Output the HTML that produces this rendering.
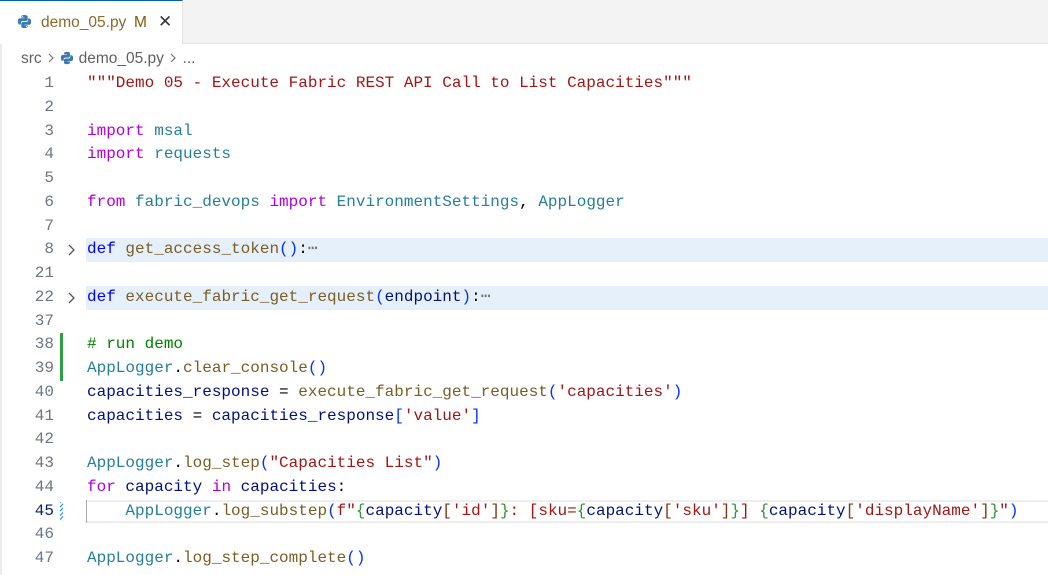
<!DOCTYPE html>
<html><head><meta charset="utf-8"><style>
body{margin:0;width:1048px;height:575px;overflow:hidden;background:#fff;font-family:"Liberation Sans",sans-serif;position:relative}
.tabbar{position:absolute;left:0;top:0;width:1048px;height:43px;background:#f3f3f3;border-bottom:1px solid #e5e5e5}
.tab{position:absolute;left:0;top:0;width:183px;height:44px;background:#fff;border-top:1px solid #005fb8;box-sizing:border-box;border-right:1px solid #e5e5e5}
.tab .t{position:absolute;left:41px;top:13px;font-size:15.5px;color:#8c6a2a}
.tab .m{position:absolute;left:134px;top:13px;font-size:15.5px;color:#895503}
.tab .x{position:absolute;left:158px;top:11px;font-size:17px;color:#333}
.crumb{position:absolute;top:50px;left:21px;font-size:15.5px;color:#616161}
.code{position:absolute;left:0;top:72px;width:1048px;font-family:"Liberation Mono",monospace;font-size:16px}
.r{position:relative;height:23.75px;line-height:23.75px;white-space:pre}
.n{position:absolute;left:0;width:54px;text-align:right;color:#6e7681}
.c{position:absolute;left:87px}
.f{position:absolute;left:86px;right:0;top:0;bottom:0;background:#e6f0fa}
.ch{position:absolute;left:66px;top:0;}
.k{color:#af00db}.d{color:#0000ff}.fn{color:#795e26}.v{color:#001080}.cl{color:#267f99}.s{color:#a31515}.cm{color:#008000}.p1{color:#0431fa}.p2{color:#319331}.p3{color:#7b3814}.o{color:#000}
.g{position:absolute;left:60px;width:3px;top:0;bottom:0;background:#2ea043}
.edge{position:absolute;left:0;top:44px;width:2px;bottom:0;background:#ececec}
</style></head><body>
<div class="tabbar"><div class="tab">
<svg style="position:absolute;left:17px;top:13px" width="15" height="15" viewBox="0 0 16 16"><path d="M7.9 1C4.5 1 4.7 2.5 4.7 2.5V4h3.3v.5H3.3S1 4.2 1 7.8s2 3.4 2 3.4h1.2V9.5s-.1-2 2-2h3.3s1.9 0 1.9-1.9V2.9S11.7 1 7.9 1zM6.1 2.1a.6.6 0 110 1.2.6.6 0 010-1.2z" fill="#3a7ab0"/><path d="M8.1 15c3.4 0 3.2-1.5 3.2-1.5V12H8v-.5h4.7S15 11.8 15 8.2s-2-3.4-2-3.4h-1.2v1.7s.1 2-2 2H6.5s-1.9 0-1.9 1.9v3.1S4.3 15 8.1 15zm1.8-1.1a.6.6 0 110-1.2.6.6 0 010 1.2z" fill="#3a7ab0"/></svg>
<span class="t">demo_05.py</span><span class="m">M</span><span class="x">✕</span></div></div>
<div class="edge"></div>
<div class="crumb">src <svg width="10" height="12" viewBox="0 0 10 12" style="vertical-align:-1px"><path d="M3 2l4 4-4 4" stroke="#777" fill="none" stroke-width="1.2"/></svg> <svg style="vertical-align:-2px" width="14" height="14" viewBox="0 0 16 16"><path d="M7.9 1C4.5 1 4.7 2.5 4.7 2.5V4h3.3v.5H3.3S1 4.2 1 7.8s2 3.4 2 3.4h1.2V9.5s-.1-2 2-2h3.3s1.9 0 1.9-1.9V2.9S11.7 1 7.9 1z" fill="#3a7ab0"/><path d="M8.1 15c3.4 0 3.2-1.5 3.2-1.5V12H8v-.5h4.7S15 11.8 15 8.2s-2-3.4-2-3.4h-1.2v1.7s.1 2-2 2H6.5s-1.9 0-1.9 1.9v3.1S4.3 15 8.1 15z" fill="#3a7ab0"/></svg> demo_05.py <svg width="10" height="12" viewBox="0 0 10 12" style="vertical-align:-1px"><path d="M3 2l4 4-4 4" stroke="#777" fill="none" stroke-width="1.2"/></svg> ...</div>
<div class="code">
<div class="r"><span class="n">1</span><span class="c s">"""Demo 05 - Execute Fabric REST API Call to List Capacities"""</span></div>
<div class="r"><span class="n">2</span></div>
<div class="r"><span class="n">3</span><span class="c"><span class="k">import</span> <span class="cl">msal</span></span></div>
<div class="r"><span class="n">4</span><span class="c"><span class="k">import</span> <span class="cl">requests</span></span></div>
<div class="r"><span class="n">5</span></div>
<div class="r"><span class="n">6</span><span class="c"><span class="k">from</span> <span class="cl">fabric_devops</span> <span class="k">import</span> <span class="cl">EnvironmentSettings</span>, <span class="cl">AppLogger</span></span></div>
<div class="r"><span class="n">7</span></div>
<div class="r"><span class="f"></span><span class="n">8</span><svg class="ch" width="12" height="24" viewBox="0 0 12 24"><path d="M3 7l5 5-5 5" stroke="#555" fill="none" stroke-width="1.3"/></svg><span class="c"><span class="d">def</span> <span class="fn">get_access_token</span><span class="p1">()</span>:<span style="color:#777">⋯</span></span></div>
<div class="r"><span class="n">21</span></div>
<div class="r"><span class="f"></span><span class="n">22</span><svg class="ch" width="12" height="24" viewBox="0 0 12 24"><path d="M3 7l5 5-5 5" stroke="#555" fill="none" stroke-width="1.3"/></svg><span class="c"><span class="d">def</span> <span class="fn">execute_fabric_get_request</span><span class="p1">(</span><span class="v">endpoint</span><span class="p1">)</span>:<span style="color:#777">⋯</span></span></div>
<div class="r"><span class="n">37</span></div>
<div class="r"><span class="g"></span><span class="n">38</span><span class="c cm"># run demo</span></div>
<div class="r"><span class="g"></span><span class="n">39</span><span class="c"><span class="cl">AppLogger</span>.<span class="fn">clear_console</span><span class="p1">()</span></span></div>
<div class="r"><span class="n">40</span><span class="c"><span class="v">capacities_response</span> = <span class="fn">execute_fabric_get_request</span><span class="p1">(</span><span class="s">'capacities'</span><span class="p1">)</span></span></div>
<div class="r"><span class="n">41</span><span class="c"><span class="v">capacities</span> = <span class="v">capacities_response</span><span class="p1">[</span><span class="s">'value'</span><span class="p1">]</span></span></div>
<div class="r"><span class="n">42</span></div>
<div class="r"><span class="n">43</span><span class="c"><span class="cl">AppLogger</span>.<span class="fn">log_step</span><span class="p1">(</span><span class="s">"Capacities List"</span><span class="p1">)</span></span></div>
<div class="r"><span class="n">44</span><span class="c"><span class="k">for</span> <span class="v">capacity</span> <span class="k">in</span> <span class="v">capacities</span>:</span></div>
<div class="r"><span style="position:absolute;left:86px;right:0;top:0;bottom:0;border-top:2px solid #eee;border-bottom:2px solid #eee;box-sizing:border-box"></span><span style="position:absolute;left:60px;width:3px;top:2px;bottom:2px;background:repeating-linear-gradient(135deg,#1a85ff 0 1px,#fff 1px 3px)"></span><span style="position:absolute;left:86px;width:1px;top:0;bottom:0;background:#aaa"></span><span class="n" style="color:#0b216f">45</span><span class="c">    <span class="cl">AppLogger</span>.<span class="fn">log_substep</span><span class="p1">(</span><span class="s">f"</span><span class="p2">{</span><span class="v">capacity</span><span class="p3">[</span><span class="s">'id'</span><span class="p3">]</span><span class="p2">}</span><span class="s">: [sku=</span><span class="p2">{</span><span class="v">capacity</span><span class="p3">[</span><span class="s">'sku'</span><span class="p3">]</span><span class="p2">}</span><span class="s">] </span><span class="p2">{</span><span class="v">capacity</span><span class="p3">[</span><span class="s">'displayName'</span><span class="p3">]</span><span class="p2">}</span><span class="s">"</span><span class="p1">)</span></span></div>
<div class="r"><span class="n">46</span></div>
<div class="r"><span class="n">47</span><span class="c"><span class="cl">AppLogger</span>.<span class="fn">log_step_complete</span><span class="p1">()</span></span></div>
</div>
</body></html>
